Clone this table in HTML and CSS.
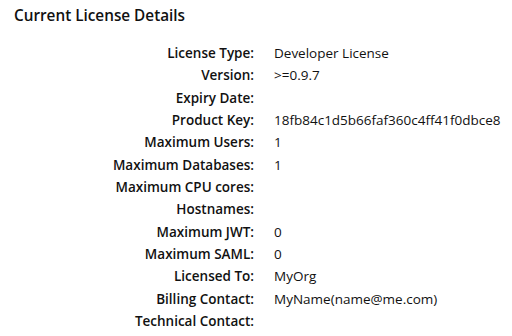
FILE: index.html
```html
<!DOCTYPE html>
<html lang="en">
  <head>
    <meta charset="UTF-8" />
    <title>License</title>
    <link rel="stylesheet" href="styles.css">
  </head>
  <body>
    <div class="panel">
      <h2 class="title">Current License Details</h2>
      <dl class="details">
        <dt>License Type:</dt><dd>Developer License</dd>
        <dt>Version:</dt><dd>&gt;=0.9.7</dd>
        <dt>Expiry Date:</dt><dd></dd>
        <dt>Product Key:</dt><dd>18fb84c1d5b66faf360c4ff41f0dbce8</dd>
        <dt>Maximum Users:</dt><dd>1</dd>
        <dt>Maximum Databases:</dt><dd>1</dd>
        <dt>Maximum CPU cores:</dt><dd></dd>
        <dt>Hostnames:</dt><dd></dd>
        <dt>Maximum JWT:</dt><dd>0</dd>
        <dt>Maximum SAML:</dt><dd>0</dd>
        <dt>Licensed To:</dt><dd>MyOrg</dd>
        <dt>Billing Contact:</dt><dd>MyName(name@me.com)</dd>
        <dt>Technical Contact:</dt><dd></dd>
      </dl>
    </div>
  </body>
</html>
```

FILE: styles.css
```css
body {
  margin: 0;
  background-color: #fff;
  color: #111;
  font-family: "Open Sans", sans-serif;
}
.panel {
  padding: 4px 0 4px 14px;
}
.title {
  margin: 0 0 16px;
  font-size: 15.3px;
  font-weight: 600;
  line-height: 22px;
}
.details {
  display: grid;
  grid-template-columns: 240px auto;
  grid-auto-rows: 22.33px;
  column-gap: 20px;
  align-items: center;
  margin: 0;
  font-size: 13.5px;
  line-height: 22px;
  white-space: nowrap;
}
.details dt {
  text-align: right;
  font-weight: 600;
}
.details dd {
  margin: 0;
}
```
